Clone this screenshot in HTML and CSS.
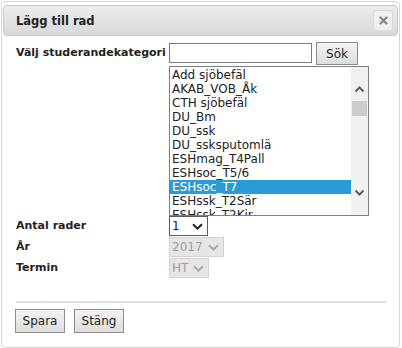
FILE: index.html
```
<!DOCTYPE html>
<html lang="sv">
<head>
<meta charset="utf-8">
<title>Lägg till rad</title>
<link rel="stylesheet" href="styles.css">
</head>
<body>
<div class="dialog">
  <div class="titlebar">
    <span class="title">Lägg till rad</span>
    <span class="close"><svg width="9" height="9" viewBox="0 0 9 9"><path d="M1.5 1.5 L7.5 7.5 M7.5 1.5 L1.5 7.5" stroke="#8a8a8a" stroke-width="2.4" stroke-linecap="round"/></svg></span>
  </div>
  <div class="content">
    <div class="row row-cat">
      <span class="label label-top">Välj studerandekategori</span>
      <div class="cat">
        <div class="search">
          <span class="input"></span>
          <span class="btn btn-sok">Sök</span>
        </div>
        <div class="listbox">
          <div class="items">
            <div class="item">Add sjöbefäl</div>
            <div class="item">AKAB_VOB_Åk</div>
            <div class="item">CTH sjöbefäl</div>
            <div class="item">DU_Bm</div>
            <div class="item">DU_ssk</div>
            <div class="item">DU_ssksputomlä</div>
            <div class="item">ESHmag_T4Pall</div>
            <div class="item">ESHsoc_T5/6</div>
            <div class="item selected">ESHsoc_T7</div>
            <div class="item">ESHssk_T2Sär</div>
            <div class="item item-partial">ESHssk_T2Kir</div>
          </div>
          <div class="scrollbar">
            <svg class="arrow" width="11" height="8" viewBox="0 0 11 8"><path d="M1.5 6.5 L5.5 2.5 L9.5 6.5" fill="none" stroke="#5e5e5e" stroke-width="2"/></svg>
            <span class="thumb"></span>
            <svg class="arrow arrow-down" width="11" height="8" viewBox="0 0 11 8"><path d="M1.5 1.5 L5.5 5.5 L9.5 1.5" fill="none" stroke="#5e5e5e" stroke-width="2"/></svg>
          </div>
        </div>
      </div>
    </div>
    <div class="row">
      <span class="label">Antal rader</span>
      <span class="select"><span class="val val-num">1</span><svg width="11" height="7" viewBox="0 0 11 7"><path d="M1 1.2 L5.5 5.5 L10 1.2" fill="none" stroke="#222" stroke-width="2"/></svg></span>
    </div>
    <div class="row">
      <span class="label">År</span>
      <span class="select disabled"><span class="val">2017</span><svg width="11" height="7" viewBox="0 0 11 7"><path d="M1 1.2 L5.5 5.5 L10 1.2" fill="none" stroke="#a8a8a8" stroke-width="2"/></svg></span>
    </div>
    <div class="row">
      <span class="label">Termin</span>
      <span class="select disabled"><span class="val">HT</span><svg width="11" height="7" viewBox="0 0 11 7"><path d="M1 1.2 L5.5 5.5 L10 1.2" fill="none" stroke="#a8a8a8" stroke-width="2"/></svg></span>
    </div>
    <div class="separator"></div>
    <div class="buttons">
      <span class="btn btn-foot">Spara</span>
      <span class="btn btn-foot">Stäng</span>
    </div>
  </div>
</div>
</body>
</html>
```
FILE: styles.css
```
* { box-sizing: border-box; }
html, body { margin: 0; padding: 0; background: #ffffff; }
body {
  font-family: "DejaVu Sans", Verdana, sans-serif;
  color: #222222;
  width: 402px;
  height: 348px;
  overflow: hidden;
}
.dialog {
  margin: 1px;
  width: 399px;
  height: 347px;
  border: 1px solid #d6d6d6;
  border-radius: 4px;
  padding: 3px 1px 0 1px;
  background: #ffffff;
}
.titlebar {
  height: 31px;
  border: 1px solid #c9c9c9;
  border-radius: 4px;
  background: linear-gradient(#ececec, #d8d8d8);
  display: flex;
  align-items: center;
  justify-content: space-between;
  padding: 0 4px 0 12px;
}
.title {
  font-weight: bold;
  font-size: 11.5px;
  color: #222222;
}
.close {
  width: 20px;
  height: 21px;
  border: 1px solid #d9d9d9;
  border-radius: 3px;
  background: #f0f0f0;
  display: flex;
  align-items: center;
  justify-content: center;
}
.content {
  padding: 6px 12px 0 13px;
}
.row {
  display: flex;
  align-items: flex-start;
  height: 21px;
}
.row-cat { height: auto; }
.label {
  width: 153px;
  flex: none;
  font-size: 11px;
  font-weight: bold;
  line-height: 20px;
}
.label-top {
  line-height: 13px;
  padding-top: 4px;
}
.cat {
  display: flex;
  flex-direction: column;
}
.search {
  display: flex;
  align-items: flex-start;
  gap: 4px;
  height: 23px;
}
.input {
  display: block;
  width: 143px;
  height: 20px;
  margin-top: 1px;
  border: 1px solid #7a7a7a;
  background: #ffffff;
}
.btn {
  display: flex;
  align-items: center;
  justify-content: center;
  font-size: 12px;
  color: #222222;
  border: 1px solid #8c8c8c;
  background: linear-gradient(#f3f3f3, #dddddd);
}
.btn-sok {
  width: 42px;
  height: 23px;
}
.listbox {
  margin-top: 1px;
  width: 200px;
  height: 150px;
  border: 1px solid #7f7f7f;
  display: flex;
  overflow: hidden;
}
.items {
  flex: 1;
  padding-top: 1px;
  overflow: hidden;
}
.item {
  height: 14px;
  line-height: 14px;
  font-size: 12px;
  padding-left: 2px;
  white-space: nowrap;
  color: #222222;
}
.item-partial {
  height: 7px;
  overflow: hidden;
}
.item.selected {
  background: #2b9bd8;
  color: #ffffff;
}
.scrollbar {
  width: 17px;
  flex: none;
  background: #f0f0f0;
  display: flex;
  flex-direction: column;
  align-items: center;
  padding: 18px 0 18px 0;
}
.arrow { display: block; flex: none; }
.arrow-down { margin-top: auto; }
.thumb {
  display: block;
  width: 15px;
  height: 15px;
  margin-top: 8px;
  background: #cdcdcd;
}
.select {
  display: flex;
  align-items: center;
  gap: 5px;
  height: 20px;
  padding: 0 4px 0 2px;
  border: 1px solid #5a5a5a;
  background: #ffffff;
  font-size: 12px;
  color: #222222;
}
.select svg { display: block; margin-top: 1px; }
.val-num { min-width: 15px; }
.select.disabled {
  border-color: #d2d2d2;
  background: #e6e6e6;
  color: #9c9c9c;
}
.separator {
  margin-top: 22px;
  height: 2px;
  background: #dedede;
}
.buttons {
  display: flex;
  gap: 9px;
  margin-top: 6px;
  margin-left: -1px;
}
.btn-foot {
  width: 50px;
  height: 24px;
}
```
